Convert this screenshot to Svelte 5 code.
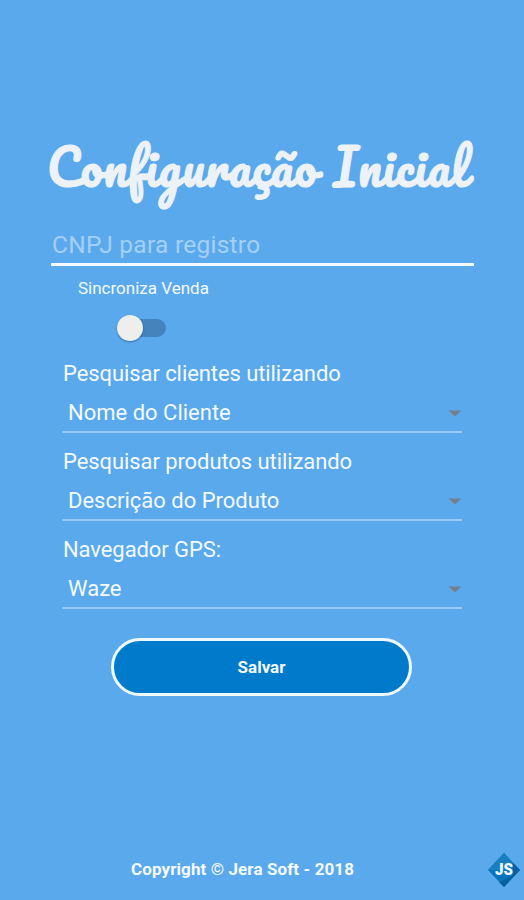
<script lang="ts">
  let cnpj = '';
  let syncSales = false;

  const fields = [
    { label: 'Pesquisar clientes utilizando', value: 'Nome do Cliente' },
    { label: 'Pesquisar produtos utilizando', value: 'Descrição do Produto' },
    { label: 'Navegador GPS:', value: 'Waze' },
  ];
</script>

<main class="screen">
  <h1 class="title">Configuração Inicial</h1>

  <input class="cnpj" type="text" placeholder="CNPJ para registro" bind:value={cnpj} />

  <div class="sync">
    <span class="sync__label">Sincroniza Venda</span>
    <button
      class="switch"
      class:switch--on={syncSales}
      role="switch"
      aria-checked={syncSales}
      aria-label="Sincroniza Venda"
      on:click={() => (syncSales = !syncSales)}
    >
      <span class="switch__thumb"></span>
    </button>
  </div>

  <div class="fields">
    {#each fields as field}
      <div class="field">
        <span class="field__label">{field.label}</span>
        <button class="field__select">
          <span>{field.value}</span>
          <svg width="14" height="7" viewBox="0 0 14 7" aria-hidden="true">
            <path d="M0.5 0.5H13.5L7 6.5Z" fill="#71808e" />
          </svg>
        </button>
      </div>
    {/each}
  </div>

  <button class="save">Salvar</button>

  <footer class="footer">
    <span class="footer__text">Copyright © Jera Soft - 2018</span>
    <svg class="footer__logo" width="34" height="36" viewBox="0 0 34 36" aria-hidden="true">
      <path d="M17 1L33 18L17 35L1 18Z" fill="#0874bd" />
      <path d="M17 1L33 18H1Z" fill="#197fc3" />
      <path d="M26 11L33 18L17 35L12 30L25 24Z" fill="#07609f" />
      <text x="8" y="23" textLength="18" lengthAdjust="spacingAndGlyphs">JS</text>
    </svg>
  </footer>
</main>

<style>
  :global(body) {
    margin: 0;
    background: #5aa9ec;
  }

  .screen {
    display: flex;
    flex-direction: column;
    box-sizing: border-box;
    width: 524px;
    height: 900px;
    padding-top: 130px;
    overflow: hidden;
    background: #5aa9ec;
    color: #f4faff;
    font-family: Roboto, sans-serif;
  }

  button,
  input {
    padding: 0;
    border: 0;
    background: none;
    color: inherit;
    font-family: inherit;
    outline: none;
  }

  .title {
    height: 92px;
    margin: 0 0 0 47px;
    color: #edf2f6;
    font: 400 48px/74px Pacifico, Lato, cursive;
    font-variant-ligatures: none;
    letter-spacing: 1.15px;
    word-spacing: 2px;
    -webkit-text-stroke: 1.2px #edf2f6;
    white-space: nowrap;
  }

  .cnpj {
    box-sizing: border-box;
    width: 423px;
    height: 44px;
    margin-left: 51px;
    padding: 4px 2px 0 1px;
    border-bottom: 3px solid #f2faff;
    font-size: 24.5px;
    letter-spacing: 0.25px;
  }

  .cnpj::placeholder {
    color: #a4d0f6;
    opacity: 1;
  }

  .sync {
    display: flex;
    flex-direction: column;
    height: 91px;
    padding-left: 78px;
  }

  .sync__label {
    margin-top: 11px;
    font-size: 17px;
    line-height: 22px;
  }

  .switch {
    display: flex;
    align-items: center;
    width: 45px;
    height: 18px;
    margin: 20px 0 0 43px;
    border-radius: 9px;
    background: #4583bd;
  }

  .switch--on {
    justify-content: flex-end;
  }

  .switch__thumb {
    width: 26px;
    height: 26px;
    margin-left: -4px;
    flex-shrink: 0;
    border-radius: 50%;
    background: #eeeeec;
    box-shadow: 0 1px 2px rgba(0, 40, 80, 0.45);
  }

  .fields {
    width: 400px;
    margin-left: 62px;
  }

  .field {
    display: flex;
    flex-direction: column;
    height: 88px;
  }

  .field__label {
    padding: 3px 0 0 1px;
    font-size: 22px;
    line-height: 28px;
    letter-spacing: -0.08px;
  }

  .field__select {
    display: flex;
    align-items: center;
    justify-content: space-between;
    box-sizing: border-box;
    height: 45px;
    padding: 6px 0 0 6px;
    border-bottom: 2px solid #98c8f4;
    font-size: 22px;
  }

  .field__select svg {
    margin-top: 2px;
  }

  .save {
    width: 301px;
    height: 58px;
    margin: 17px 0 0 111px;
    flex-shrink: 0;
    border: 3px solid #effaff;
    border-radius: 29px;
    background: #007bcb;
    font-size: 17px;
    font-weight: 700;
  }

  .footer {
    display: flex;
    align-items: center;
    justify-content: space-between;
    height: 36px;
    margin: auto 3px 12px 131px;
  }

  .footer__text {
    margin-bottom: 2px;
    font-size: 17px;
    font-weight: 700;
    letter-spacing: 0.1px;
  }

  .footer__logo text {
    fill: #f4faff;
    font: 900 16px Roboto, sans-serif;
  }
</style>
